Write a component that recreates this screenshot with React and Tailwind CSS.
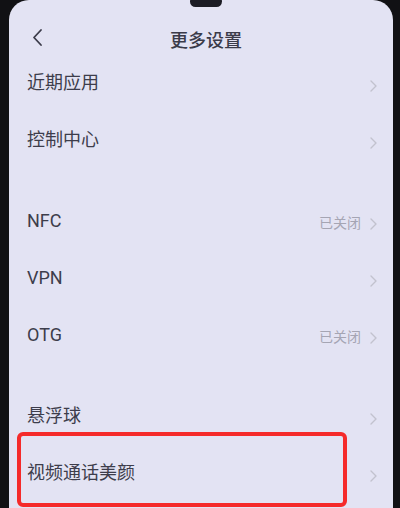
const groups = [
  [{ label: "近期应用" }, { label: "控制中心" }],
  [
    { label: "NFC", value: "已关闭" },
    { label: "VPN" },
    { label: "OTG", value: "已关闭" },
  ],
  [{ label: "悬浮球" }, { label: "视频通话美颜" }],
];

function Chevron() {
  return (
    <svg width="7" height="12" viewBox="0 0 7 12" fill="none">
      <path d="M1 1l5 5-5 5" stroke="#c2c2ce" strokeWidth="1.4" strokeLinecap="round" strokeLinejoin="round" />
    </svg>
  );
}

function Row({ label, value }) {
  return (
    <div className="h-[57px] flex items-center justify-between pl-[18px] pr-[16px]">
      <span className="text-[18px] text-[#3d3d4b]">{label}</span>
      <div className="flex items-center gap-[9px] pt-[6px]">
        {value && <span className="text-[14px] text-[#a5a5b3]">{value}</span>}
        <Chevron />
      </div>
    </div>
  );
}

export default function App() {
  return (
    <div
      className="w-[400px] h-[508px] bg-[#111114] flex overflow-hidden"
      style={{ fontFamily: '"Roboto", "Noto Sans CJK SC", sans-serif' }}
    >
      <div className="relative flex-1 ml-[9px] mr-[7px] bg-[#e3e3f3] rounded-t-[20px] flex flex-col">
        {/* notch */}
        <div className="absolute left-[181px] -top-[4px] w-[32px] h-[11px] rounded-full bg-[#1c1c24]" />

        {/* Header */}
        <div className="h-[54px] relative flex items-center justify-center pt-[26px]">
          <svg className="absolute left-[22px] top-[28px]" width="12" height="19" viewBox="0 0 12 19" fill="none">
            <path d="M10 2L3 9.5 10 17" stroke="#3b3b49" strokeWidth="1.8" strokeLinecap="round" strokeLinejoin="round" />
          </svg>
          <h1 className="text-[18px] font-medium text-[#3b3b49] ml-[10px]">更多设置</h1>
        </div>

        {/* Settings list */}
        {groups.map((g, i) => (
          <div key={i} className={i > 0 ? "mt-[24px]" : ""}>
            {g.map((item) => (
              <Row key={item.label} {...item} />
            ))}
          </div>
        ))}

        {/* highlight annotation */}
        <div className="absolute left-[8px] top-[432px] w-[330px] h-[75px] border-4 border-[#f52a2a] rounded-md" />
      </div>
    </div>
  );
}
